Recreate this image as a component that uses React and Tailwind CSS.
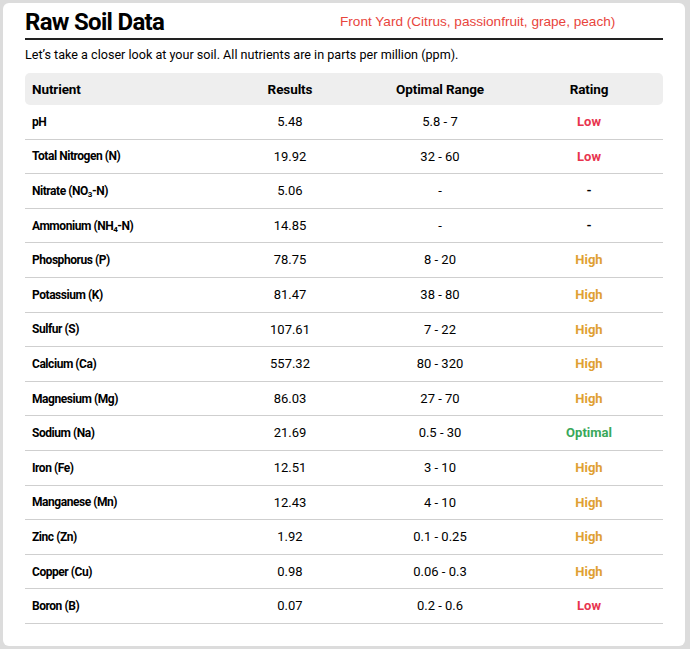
import React from 'react';

const rows = [
  ['pH', '5.48', '5.8 - 7', 'Low'],
  ['Total Nitrogen (N)', '19.92', '32 - 60', 'Low'],
  [<>Nitrate (NO<sub className="text-[8px]">3</sub>-N)</>, '5.06', '-', '-'],
  [<>Ammonium (NH<sub className="text-[8px]">4</sub>-N)</>, '14.85', '-', '-'],
  ['Phosphorus (P)', '78.75', '8 - 20', 'High'],
  ['Potassium (K)', '81.47', '38 - 80', 'High'],
  ['Sulfur (S)', '107.61', '7 - 22', 'High'],
  ['Calcium (Ca)', '557.32', '80 - 320', 'High'],
  ['Magnesium (Mg)', '86.03', '27 - 70', 'High'],
  ['Sodium (Na)', '21.69', '0.5 - 30', 'Optimal'],
  ['Iron (Fe)', '12.51', '3 - 10', 'High'],
  ['Manganese (Mn)', '12.43', '4 - 10', 'High'],
  ['Zinc (Zn)', '1.92', '0.1 - 0.25', 'High'],
  ['Copper (Cu)', '0.98', '0.06 - 0.3', 'High'],
  ['Boron (B)', '0.07', '0.2 - 0.6', 'Low'],
];

const ratingColor = {
  Low: 'text-[#e8344e]',
  High: 'text-[#e0a032]',
  Optimal: 'text-[#3aa85a]',
  '-': 'text-black',
};

const grid = 'grid grid-cols-[190px_150px_150px_1fr] items-center';

export default function App() {
  return (
    <div className="min-h-[649px] bg-[#dcdcdc] p-[3px] pr-[5px] font-['Roboto',sans-serif] text-black">
      <div className="bg-white rounded-[6px] px-[22px] pt-[6px] pb-[22px]">
        <div className="flex items-center border-b-2 border-[#222] pb-[3px]">
          <h1 className="text-[24px] leading-[26px] font-bold tracking-[-0.7px] w-[315px]">Raw Soil Data</h1>
          <span className="text-[13.6px] text-[#e8453c] font-['Liberation_Sans',sans-serif]">
            Front Yard (Citrus, passionfruit, grape, peach)
          </span>
        </div>
        <p className="text-[12.6px] leading-[17px] mt-[6px] mb-[10px]">
          Let’s take a closer look at your soil. All nutrients are in parts per million (ppm).
        </p>
        <div className={`${grid} bg-[#eeeeee] rounded-[5px] h-[32px] text-[13.5px] font-bold tracking-[-0.1px]`}>
          <div className="pl-[7px]">Nutrient</div>
          <div className="text-center">Results</div>
          <div className="text-center">Optimal Range</div>
          <div className="text-center">Rating</div>
        </div>
        {rows.map((r, i) => (
          <div key={i} className={`${grid} h-[34.6px] border-b-[1.5px] border-[#cfcfcf] text-[13px]`}>
            <div className="pl-[7px] font-bold text-[12px] tracking-[-0.45px]">{r[0]}</div>
            <div className="text-center">{r[1]}</div>
            <div className="text-center">{r[2]}</div>
            <div className={`text-center font-bold ${ratingColor[r[3]]}`}>{r[3]}</div>
          </div>
        ))}
      </div>
    </div>
  );
}
